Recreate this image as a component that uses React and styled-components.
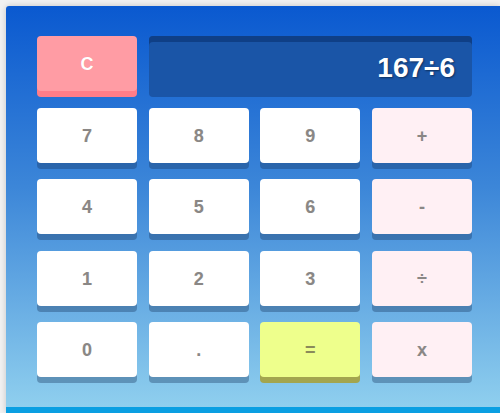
import React from 'react'
import styled, { createGlobalStyle } from 'styled-components'

const GlobalStyle = createGlobalStyle`
  html, body {
    margin: 0;
    padding: 0;
    overflow: hidden;
    background: #f1f1f1;
  }
  body {
    padding: 6px 0 0 6px;
    font-family: "Liberation Sans", Arial, sans-serif;
  }
`;

const Calculator = styled.div`
  width: 494px;
  height: 407px;
  box-sizing: border-box;
  padding: 30px 0 0 31px;
  background: linear-gradient(to bottom, #0a59d0 0%, #3c86d8 45%, #8fcfee 100%);
  border-bottom: 6px solid #0a9fe2;
  border-radius: 3px 0 0 0;
  box-shadow: 0 0 6px rgba(0, 0, 0, 0.18);
`;

const Keypad = styled.div`
  display: grid;
  grid-template-columns: repeat(4, 100px);
  grid-auto-rows: 61px;
  column-gap: 11.67px;
  row-gap: 10.5px;
`;

const palette = {
  clear: { face: '#ff9ca4', edge: '#ff7d88', text: '#ffffff' },
  digit: { face: '#ffffff', edge: 'rgba(20, 50, 90, 0.35)', text: '#8a8785' },
  op: { face: '#fff0f4', edge: 'rgba(20, 50, 90, 0.35)', text: '#8a8785' },
  equals: { face: '#eeff8c', edge: '#a3a54e', text: '#8a8a5a' },
};

const Key = styled.button`
  border: none;
  margin: 0;
  padding: 2px 0 0;
  height: 55px;
  border-radius: 4px;
  background: ${props => palette[props.kind].face};
  color: ${props => palette[props.kind].text};
  box-shadow: 0 6px 0 ${props => palette[props.kind].edge};
  font-family: "Liberation Sans", Arial, sans-serif;
  font-weight: 700;
  font-size: 18px;
  text-shadow: 0 0 1px rgba(0, 0, 0, 0.08);
  cursor: pointer;
`;

const Display = styled.div`
  grid-column: span 3;
  height: 61px;
  box-sizing: border-box;
  border-radius: 4px;
  background: #1a55a7;
  box-shadow: inset 0 6px 0 #0f3f86;
  display: flex;
  align-items: center;
  justify-content: flex-end;
  padding: 2px 17px 0 0;
  color: #ffffff;
  font-weight: 700;
  font-size: 28px;
  text-shadow: 1px 1px 2px rgba(0, 0, 0, 0.45);
`;

const rows = [
  [['7', 'digit'], ['8', 'digit'], ['9', 'digit'], ['+', 'op']],
  [['4', 'digit'], ['5', 'digit'], ['6', 'digit'], ['-', 'op']],
  [['1', 'digit'], ['2', 'digit'], ['3', 'digit'], ['÷', 'op']],
  [['0', 'digit'], ['.', 'digit'], ['=', 'equals'], ['x', 'op']],
];

export default function App() {
  return (
    <>
      <GlobalStyle />
      <Calculator>
        <Keypad>
          <Key kind="clear">C</Key>
          <Display>167÷6</Display>
          {rows.flat().map(([label, kind]) => (
            <Key key={label} kind={kind}>{label}</Key>
          ))}
        </Keypad>
      </Calculator>
    </>
  )
}
